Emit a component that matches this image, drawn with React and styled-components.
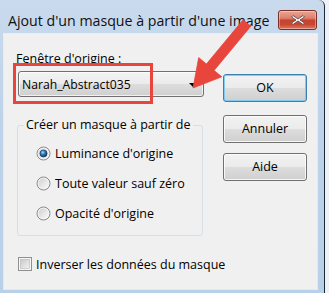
import React from "react";
import styled, { createGlobalStyle } from "styled-components";

const Global = createGlobalStyle`
  html, body { margin: 0; padding: 0; }
  body { background: #eef2f6; font-family: "Open Sans", "Noto Sans", sans-serif; }
`;

const Screen = styled.div`
  position: relative;
  width: 329px;
  height: 293px;
  overflow: hidden;
  background: #eef2f6;
`;

const Window = styled.div`
  width: 325px;
  height: 293px;
  box-sizing: border-box;
  border-right: 1px solid #1b2a3a;
  border-top-right-radius: 6px;
  background: linear-gradient(180deg, #c9daed 0%, #bed3ea 40%, #b9d0e9 100%);
  display: flex;
  flex-direction: column;
`;

const TitleBar = styled.div`
  height: 34px;
  flex: none;
  display: flex;
  align-items: flex-start;
  justify-content: space-between;
  padding: 0 7px 0 8px;
  box-sizing: border-box;
`;

const Title = styled.div`
  font-family: "Open Sans", "Noto Sans", sans-serif;
  font-size: 14.2px;
  line-height: 20px;
  margin-top: 11px;
  color: #111;
  white-space: nowrap;
`;

const CloseButton = styled.div`
  width: 39px;
  height: 20px;
  margin-top: 10px;
  box-sizing: border-box;
  border: 1px solid #7a2e24;
  border-radius: 3px;
  background: linear-gradient(
    180deg,
    #e9a595 0%,
    #dc806d 40%,
    #c5432f 52%,
    #c84833 75%,
    #e07a5e 100%
  );
  box-shadow: inset 0 0 0 1px rgba(255, 255, 255, 0.35);
  display: flex;
  align-items: center;
  justify-content: center;
`;

const Client = styled.div`
  position: relative;
  flex: none;
  height: 255px;
  margin: 0 7px 4px 4px;
  background: #f0f0f0;
  box-shadow: 0 0 0 1px rgba(255, 255, 255, 0.55);
  display: flex;
  font-family: "Open Sans", "Noto Sans", sans-serif;
  font-size: 12.5px;
  color: #000;
`;

const LeftCol = styled.div`
  width: 206px;
  padding: 17px 0 0 12px;
  display: flex;
  flex-direction: column;
  align-items: flex-start;
`;

const RightCol = styled.div`
  padding: 40px 0 0 1px;
  display: flex;
  flex-direction: column;
`;

const FieldLabel = styled.div`
  font-size: 12.5px;
  line-height: 16px;
  white-space: nowrap;
`;

const Combo = styled.div`
  margin: 4px 0 0 2px;
  width: 186px;
  height: 26px;
  box-sizing: border-box;
  border: 1px solid #707070;
  border-radius: 3px;
  background: linear-gradient(180deg, #f3f3f3 0%, #ebebeb 50%, #dddddd 51%, #cfcfcf 100%);
  box-shadow: inset 0 0 0 1px rgba(255, 255, 255, 0.7);
  display: flex;
  align-items: center;
  justify-content: space-between;
  padding: 0 6px 0 3px;
  font-size: 12.2px;
  white-space: nowrap;
`;

const ComboArrow = styled.span`
  width: 0;
  height: 0;
  border-left: 4px solid transparent;
  border-right: 4px solid transparent;
  border-top: 4px solid #000;
  margin-top: 2px;
`;

const GroupBox = styled.fieldset`
  margin: 20px 0 0 1px;
  width: 186px;
  box-sizing: border-box;
  border: 1px solid #d5dfe5;
  border-radius: 3px;
  padding: 5px 0 7px 18px;
  min-width: 0;
`;

const Legend = styled.legend`
  font-size: 12.5px;
  line-height: 16px;
  padding: 0 2px;
  margin-left: -12px;
  white-space: nowrap;
`;

const OptionRow = styled.div`
  height: 30px;
  display: flex;
  align-items: center;
  gap: 4px;
  white-space: nowrap;
`;

const CheckRow = styled.div`
  margin: 20px 0 0 2px;
  height: 16px;
  display: flex;
  align-items: center;
  gap: 4px;
  white-space: nowrap;
`;

const Button = styled.div`
  width: 84px;
  height: 28px;
  box-sizing: border-box;
  margin-bottom: ${(p) => p.$after || 0}px;
  border: 1px solid ${(p) => (p.$default ? "#3c7fb1" : "#707070")};
  border-radius: 3px;
  background: linear-gradient(180deg, #f2f2f2 0%, #ebebeb 50%, #dddddd 51%, #cfcfcf 100%);
  box-shadow: inset 0 0 0 1px ${(p) => (p.$default ? "rgba(120, 200, 240, 0.9)" : "rgba(255, 255, 255, 0.8)")};
  display: flex;
  align-items: center;
  justify-content: center;
  font-size: 12.5px;
  line-height: 1;
  color: #000;
`;

const Highlight = styled.div`
  position: absolute;
  left: 9px;
  top: 29px;
  width: 140px;
  height: 41px;
  box-sizing: border-box;
  border: 3px solid #e8453c;
  pointer-events: none;
`;

const ArrowSvg = styled.svg`
  position: absolute;
  left: 0;
  top: 0;
  pointer-events: none;
`;

function Radio({ checked }) {
  return (
    <svg width="15" height="15" viewBox="0 0 15 15">
      <defs>
        <linearGradient id="rbg" x1="0" y1="0" x2="1" y2="1">
          <stop offset="0" stopColor="#cfcfcf" />
          <stop offset="1" stopColor="#fbfbfb" />
        </linearGradient>
        <radialGradient id="rdot" cx="0.4" cy="0.35" r="0.7">
          <stop offset="0" stopColor="#9fe0ff" />
          <stop offset="0.45" stopColor="#2a78b8" />
          <stop offset="1" stopColor="#0b2a4e" />
        </radialGradient>
      </defs>
      <circle cx="7.5" cy="7.5" r="6.5" fill="#f4f4f4" stroke="#8b8b8b" strokeWidth="1" />
      <circle cx="7.5" cy="7.5" r="5" fill="url(#rbg)" />
      {checked && <circle cx="7.5" cy="7.5" r="3.6" fill="url(#rdot)" stroke="#16375e" strokeWidth="0.6" />}
    </svg>
  );
}

function Checkbox() {
  return (
    <svg width="14" height="14" viewBox="0 0 14 14">
      <defs>
        <linearGradient id="cbg" x1="0" y1="0" x2="1" y2="1">
          <stop offset="0" stopColor="#c8c8c8" />
          <stop offset="1" stopColor="#f4f4f4" />
        </linearGradient>
      </defs>
      <rect x="0.5" y="0.5" width="13" height="13" fill="#f6f6f6" stroke="#8e8f8f" />
      <rect x="2.5" y="2.5" width="9" height="9" fill="url(#cbg)" stroke="#b8b8b8" strokeWidth="0.6" />
    </svg>
  );
}

function CloseX() {
  return (
    <svg width="16" height="12" viewBox="0 0 16 12">
      <path
        d="M3 1.5 L8 5 L13 1.5 L14.5 3 L10 6 L14.5 9 L13 10.5 L8 7 L3 10.5 L1.5 9 L6 6 L1.5 3 Z"
        fill="#ffffff"
        stroke="#5a4a48"
        strokeWidth="0.9"
        strokeLinejoin="round"
      />
    </svg>
  );
}

function Arrow() {
  return (
    <ArrowSvg width="329" height="293" viewBox="0 0 329 293">
      <polygon
        points="193,88 221.8,76.8 214.1,70.4 250.8,26.2 243.1,19.8 206.4,64.0 198.7,57.6"
        fill="#e8463d"
        stroke="#e8463d"
        strokeWidth="0.8"
        strokeLinejoin="round"
      />
    </ArrowSvg>
  );
}

export default function App() {
  return (
    <>
      <Global />
      <Screen>
        <Window>
          <TitleBar>
            <Title>Ajout d'un masque à partir d'une image</Title>
            <CloseButton>
              <CloseX />
            </CloseButton>
          </TitleBar>
          <Client>
            <LeftCol>
              <FieldLabel>Fenêtre d'origine :</FieldLabel>
              <Combo>
                <span>Narah_Abstract035</span>
                <ComboArrow />
              </Combo>
              <GroupBox>
                <Legend>Créer un masque à partir de</Legend>
                <OptionRow>
                  <Radio checked />
                  <span>Luminance d'origine</span>
                </OptionRow>
                <OptionRow>
                  <Radio />
                  <span>Toute valeur sauf zéro</span>
                </OptionRow>
                <OptionRow>
                  <Radio />
                  <span>Opacité d'origine</span>
                </OptionRow>
              </GroupBox>
              <CheckRow>
                <Checkbox />
                <span>Inverser les données du masque</span>
              </CheckRow>
            </LeftCol>
            <RightCol>
              <Button $default $after={13}>OK</Button>
              <Button $after={10}>Annuler</Button>
              <Button>Aide</Button>
            </RightCol>
            <Highlight />
          </Client>
        </Window>
        <Arrow />
      </Screen>
    </>
  );
}
